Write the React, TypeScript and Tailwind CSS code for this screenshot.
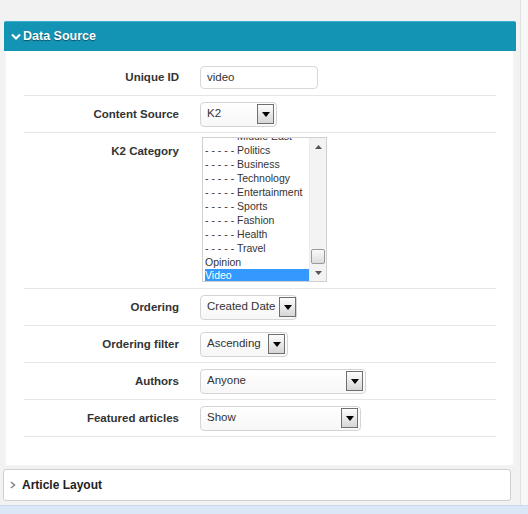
import React from 'react';

const font = { fontFamily: '"Liberation Sans", Arial, sans-serif' };

function Arrow() {
  return (
    <span className="flex h-[20px] w-[17px] shrink-0 items-center justify-center border border-[#6f6f6f] bg-gradient-to-b from-[#fdfdfd] to-[#d6d6d6]">
      <svg width="8" height="5" viewBox="0 0 8 5"><path d="M0 0h8L4 5z" fill="#000" /></svg>
    </span>
  );
}

function Select({ value, width }: { value: string; width: number }) {
  return (
    <div
      className="flex h-[25px] items-start justify-between gap-[4px] rounded-[4px] border border-[#d4d4d4] bg-gradient-to-b from-white to-[#f7f7f7] pl-[6px] pr-[2px] pt-[1px]"
      style={{ width }}
    >
      <span className="whitespace-nowrap pt-[1px] text-[11.5px] leading-[16px] text-[#333]">{value}</span>
      <Arrow />
    </div>
  );
}

function Row({ label, children, top }: { label: string; children: React.ReactNode; top?: boolean }) {
  return (
    <div className={`flex border-b border-[#e6e6e6] ${top ? 'items-start pb-[6px] pt-[4px]' : 'items-center pb-[5px] pt-[6px]'}`}>
      <div className={`w-[156px] whitespace-nowrap pr-[1px] text-right text-[11.5px] font-bold text-[#333] ${top ? 'pt-[6px]' : ''}`}>{label}</div>
      <div className={`ml-[20px] flex ${top ? '' : 'h-[25px]'} items-center`}>{children}</div>
    </div>
  );
}

const cats = ['Middle East', 'Politics', 'Business', 'Technology', 'Entertainment', 'Sports', 'Fashion', 'Health', 'Travel'];

function ListBox() {
  return (
    <div className="flex h-[145px] w-[125px] overflow-hidden border border-[#d0d0d0] bg-white">
      <div className="relative flex-1 overflow-hidden">
        <div className="mt-[-9px] pl-[2px] text-[10.5px] leading-[14px] text-[#333]">
          {cats.map((c) => (
            <div key={c} className="whitespace-nowrap">- - - - - {c}</div>
          ))}
          <div>Opinion</div>
          <div className="bg-[#3399ff] leading-[13px] text-white">Video</div>
        </div>
      </div>
      <div className="flex w-[17px] flex-col border-l border-[#ececec] bg-[#f3f3f3]">
        <div className="flex h-[17px] items-center justify-center">
          <svg width="7" height="4" viewBox="0 0 7 4"><path d="M0 4h7L3.5 0z" fill="#555" /></svg>
        </div>
        <div className="flex-1" />
        <div className="mx-[1px] h-[15px] rounded-[2px] border border-[#9a9a9a] bg-gradient-to-b from-[#fafafa] to-[#dcdcdc]" />
        <div className="flex h-[17px] items-center justify-center">
          <svg width="7" height="4" viewBox="0 0 7 4"><path d="M0 0h7L3.5 4z" fill="#555" /></svg>
        </div>
      </div>
    </div>
  );
}

export default function App() {
  return (
    <div className="flex h-[514px] w-[528px] flex-col overflow-hidden bg-[#f2f2f2]" style={font}>
      <div className="flex flex-1">
        <div className="w-[521px] border-r border-[#e2e2e2] pt-[21px]">
          <div className="ml-[4px] w-[512px]">
            <div className="flex h-[30px] items-center rounded-t-[2px] border-t border-[#3bb0cc] bg-[#1394b5] pl-[7px] text-white">
              <svg width="10" height="8" viewBox="0 0 10 8" className="mr-[2px]">
                <path d="M1 1.5l4 4 4-4" stroke="#fff" strokeWidth="2.2" fill="none" />
              </svg>
              <span className="text-[12.5px] font-bold [text-shadow:0_1px_1px_rgba(0,0,0,0.45)]">Data Source</span>
            </div>
            <div className="bg-[#f4f4f4] pl-[2px] pr-[3px]">
              <div className="bg-white pb-[28px] pl-[18px] pr-[17px] pt-[8px]">
                <Row label="Unique ID">
                  <div className="flex h-[23px] w-[118px] items-center rounded-[4px] border border-[#d8d8d8] bg-white pl-[6px] text-[11.5px] text-[#333]">video</div>
                </Row>
                <Row label="Content Source">
                  <Select value="K2" width={77} />
                </Row>
                <Row label="K2 Category" top>
                  <div className="ml-[2px]"><ListBox /></div>
                </Row>
                <Row label="Ordering">
                  <Select value="Created Date" width={97} />
                </Row>
                <Row label="Ordering filter">
                  <Select value="Ascending" width={88} />
                </Row>
                <Row label="Authors">
                  <Select value="Anyone" width={166} />
                </Row>
                <Row label="Featured articles">
                  <Select value="Show" width={161} />
                </Row>
              </div>
            </div>
          </div>
          <div className="ml-[3px] mt-[4px] flex h-[32px] w-[508px] items-center rounded-[3px] border border-[#cfcfcf] bg-white pl-[6px]">
            <svg width="6" height="8" viewBox="0 0 6 8" className="mr-[6px]">
              <path d="M1 1l3.5 3L1 7" stroke="#888" strokeWidth="1.6" fill="none" />
            </svg>
            <span className="text-[12px] font-bold text-[#222]">Article Layout</span>
          </div>
        </div>
        <div className="flex-1 bg-[#f7f7f7]" />
      </div>
      <div className="h-[9px] border-t border-[#c9d9ec] bg-[#dbe7f6]" />
    </div>
  );
}
